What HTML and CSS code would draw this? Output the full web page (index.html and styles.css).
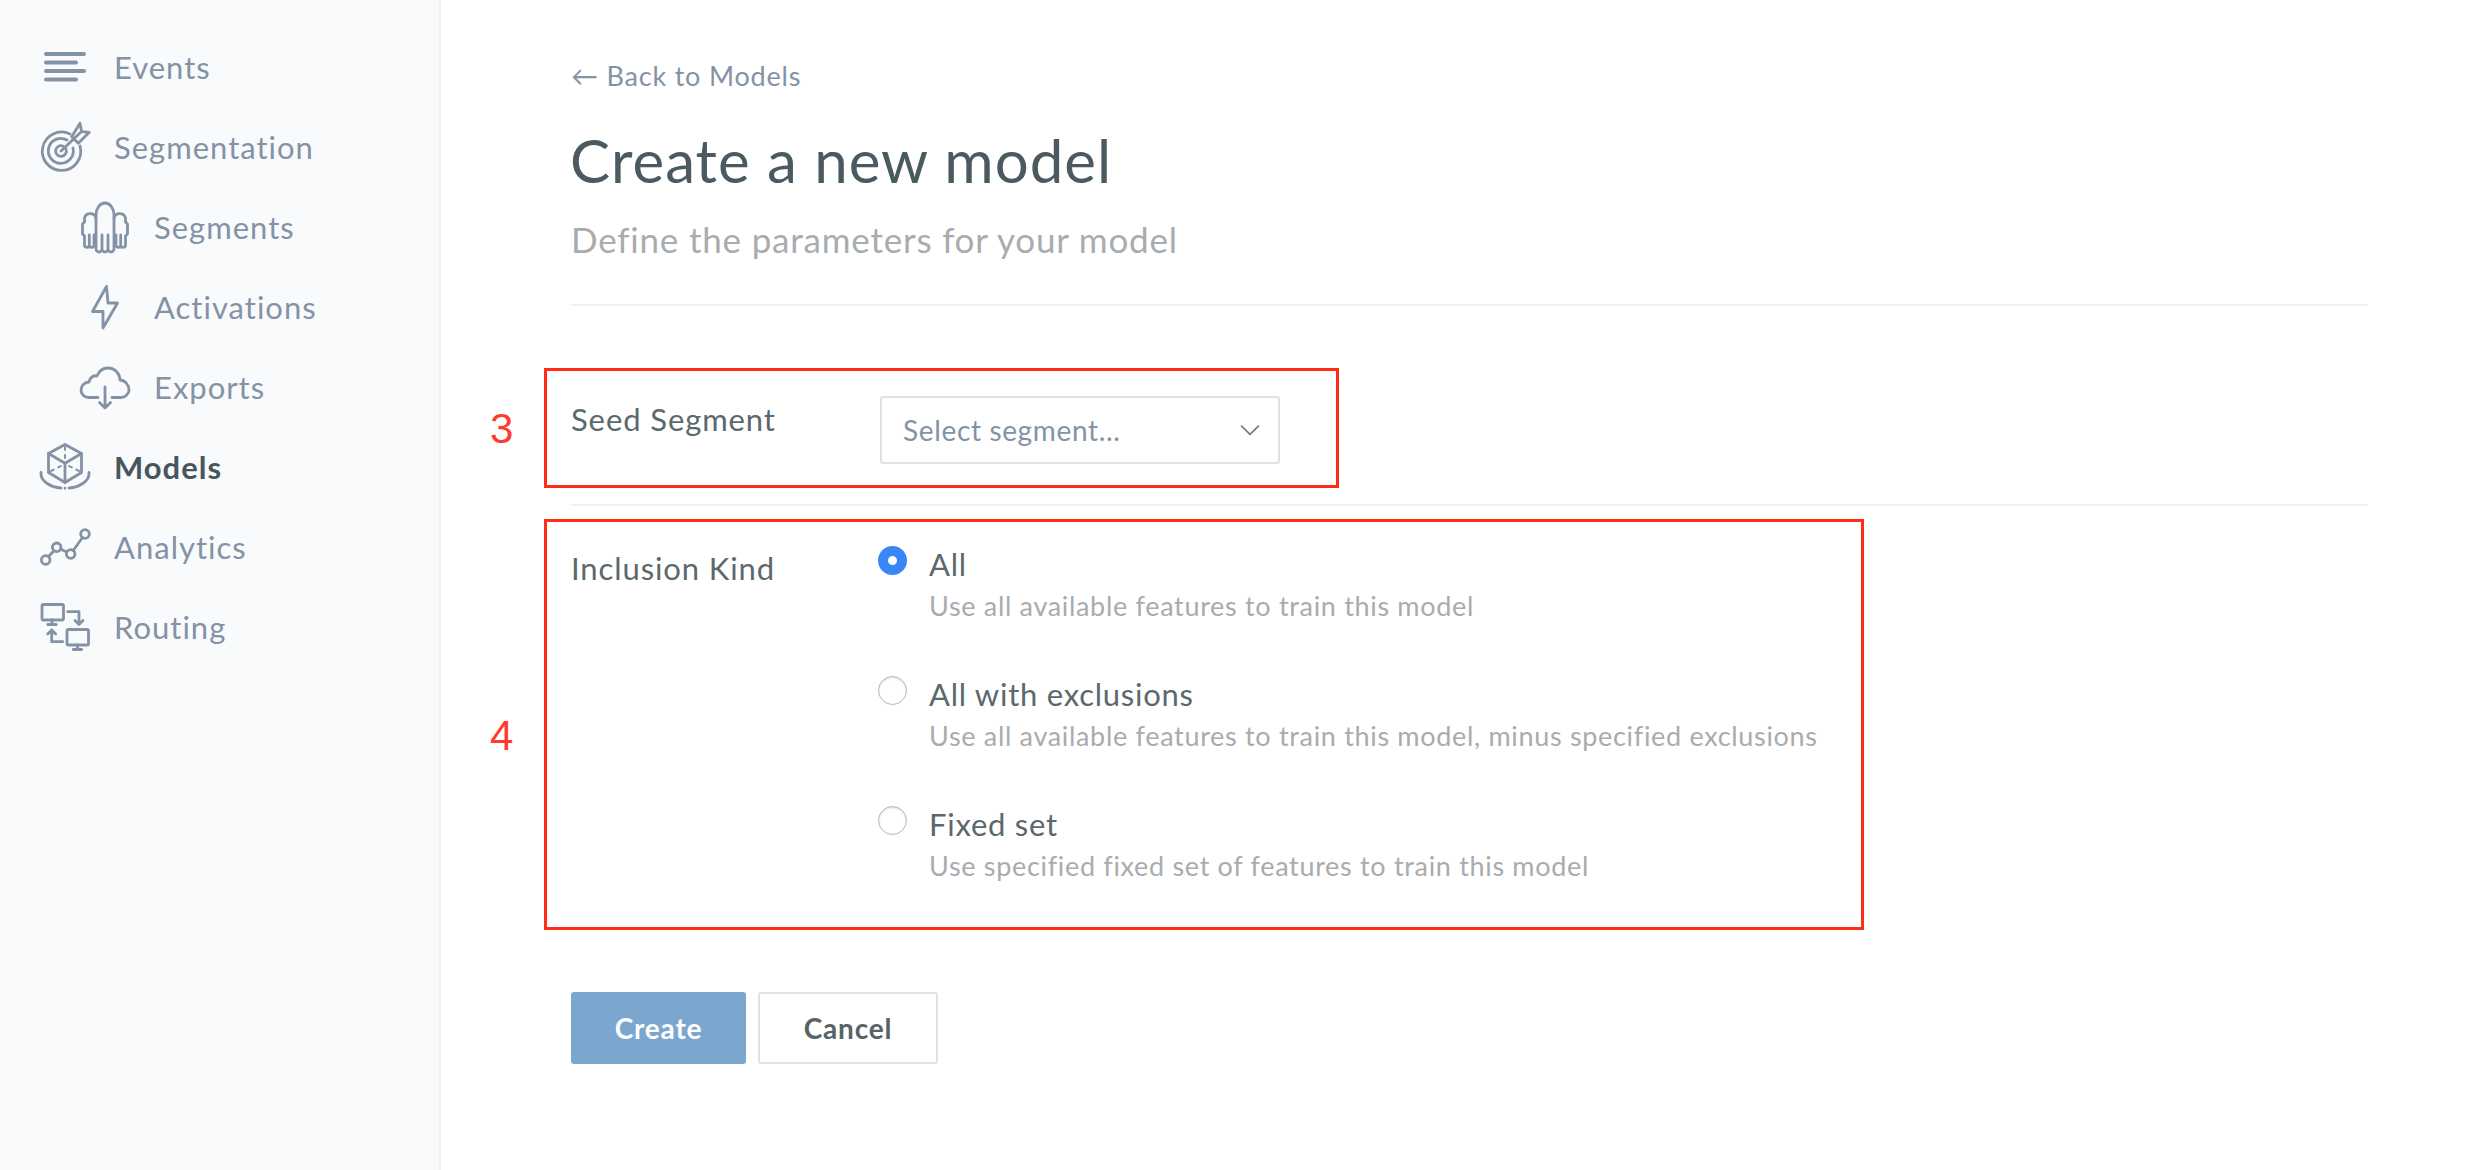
FILE: index.html
```html
<!DOCTYPE html>
<html lang="en">
<head>
<meta charset="utf-8">
<title>Create a new model</title>
<link rel="stylesheet" href="styles.css">
</head>
<body>
<div class="app">
  <nav class="sidebar">
    <a class="nav-item">
      <svg class="icon" viewBox="0 0 60 80"><path class="bars" d="M11 27H49M11 35.500H41M11 44H49M11 52.500H41"/></svg>
      <span>Events</span>
    </a>
    <a class="nav-item">
      <svg class="icon" viewBox="0 0 60 80"><g class="line"><path d="M35 27A19.200 19.200 0 1 0 45 39"/><path d="M32 33A12.500 12.500 0 1 0 38 41"/><path d="M28 39A5.400 5.400 0 1 0 31 42"/><path d="M26 44L46 25"/><path d="M36.700 29.700L45 16.300L46.700 24.700L54.300 25.300L43.300 36.300Z"/></g></svg>
      <span>Segmentation</span>
    </a>
    <a class="nav-item sub">
      <svg class="icon" viewBox="0 0 60 80"><g class="line"><path d="M21 62V28A9 12 0 0 1 39 28V62A3 3 0 0 1 33 62V48M33 62A3 3 0 0 1 27 62V48M27 62A3 3 0 0 1 21 62"/><path d="M21 31A6 6 0 0 0 9.500 31V35L7.500 37V47L9.500 49V58A2.300 2.300 0 0 0 14.300 58V48M14.300 58A2.300 2.300 0 0 0 19 58V48"/><path d="M39 31A6 6 0 0 1 50.500 31V35L52.500 37V47L50.500 49V58A2.300 2.300 0 0 1 45.700 58V48M45.700 58A2.300 2.300 0 0 1 41 58V48"/></g></svg>
      <span>Segments</span>
    </a>
    <a class="nav-item sub">
      <svg class="icon" viewBox="0 0 60 80"><path class="line" d="M31.500 19.500L17.500 44.500H28V61L42.500 36H33Z"/></svg>
      <span>Activations</span>
    </a>
    <a class="nav-item sub">
      <svg class="icon" viewBox="0 0 60 80"><g class="line"><path d="M23 50.500H14C9 50.500 6 47 6 43C6 38.500 10 35 14 35C15 30 19 28 22 29C24 24 28 21 33 21C40 21 45 27 45 33C50 33 54 38 54 43C54 47 50 50.500 46 50.500H37"/><path d="M30 40V60.500M24.500 55.500L30 61L35.500 55.500"/></g></svg>
      <span>Exports</span>
    </a>
    <a class="nav-item">
      <svg class="icon" viewBox="0 0 60 80"><g class="line"><path d="M30 17.500L46.500 26.500V45.500L30 55.500L13.500 45.500V26.500Z"/><path d="M13.500 26.500L30 36.300L46.500 26.500M30 36.300V55.500"/><path class="dash" d="M30 20V34M16 44L28 38M44 44L32 38"/><path d="M6 45.500C5 54 16 60.500 26 61M54 45.500C55 54 44 60.500 34 61M30 61.200V61.300"/></g></svg>
      <span class="strong">Models</span>
    </a>
    <a class="nav-item">
      <svg class="icon" viewBox="0 0 60 80"><g class="line"><circle cx="10.700" cy="53" r="4.300"/><circle cx="21.700" cy="40.300" r="4.300"/><circle cx="35.700" cy="47" r="4.300"/><circle cx="50" cy="27" r="4.300"/><path d="M13.500 49.500L19 43.800M25.700 42.200L31.700 45M38.200 43.500L47.500 30.500"/></g></svg>
      <span>Analytics</span>
    </a>
    <a class="nav-item">
      <svg class="icon" viewBox="0 0 60 80"><g class="line"><rect x="7" y="17.500" width="21.500" height="15.500" rx="1.500"/><path d="M17 33V37M12.700 37.500H21.300"/><rect x="32" y="42.500" width="21.500" height="15.500" rx="1.500"/><path d="M42.500 58V62M38.300 62.500H46.700"/><path d="M32.700 24.700H44V37M40 33.500L44 37.500L48 33.500"/><path d="M27.700 54.700H16.700V43M12.700 47L16.700 43L20.700 47"/></g></svg>
      <span>Routing</span>
    </a>
  </nav>

  <main class="content">
    <a class="back"><span class="arrow">←</span> Back to Models</a>
    <h1 class="title">Create a new model</h1>
    <p class="subtitle">Define the parameters for your model</p>

    <section class="row row-seed">
      <span class="marker marker-3">3</span>
      <span class="frame frame-3"></span>
      <label class="label">Seed Segment</label>
      <div class="select">
        <span>Select segment...</span>
        <svg class="chevron" viewBox="0 0 18 10"><path d="M1 1L9 9L17 1"/></svg>
      </div>
    </section>

    <section class="row row-kind">
      <span class="marker marker-4">4</span>
      <span class="frame frame-4"></span>
      <label class="label">Inclusion Kind</label>
      <div class="options">
        <div class="option">
          <span class="radio checked"></span>
          <div><div class="opt-title">All</div><div class="opt-desc">Use all available features to train this model</div></div>
        </div>
        <div class="option">
          <span class="radio"></span>
          <div><div class="opt-title">All with exclusions</div><div class="opt-desc">Use all available features to train this model, minus specified exclusions</div></div>
        </div>
        <div class="option">
          <span class="radio"></span>
          <div><div class="opt-title">Fixed set</div><div class="opt-desc">Use specified fixed set of features to train this model</div></div>
        </div>
      </div>
    </section>

    <div class="actions">
      <button class="btn primary">Create</button>
      <button class="btn">Cancel</button>
    </div>
  </main>
</div>
</body>
</html>
```
FILE: styles.css
```css
* { box-sizing: border-box; }
html, body { margin: 0; height: 100%; }
body { font-family: Lato, "Noto Sans", sans-serif; background: #fff; color: #4a5a60; overflow: hidden; }
.app { display: flex; height: 1170px; }

.sidebar { width: 441px; flex: none; background: #f9fafc; border-right: 2px solid #f0f1f3; padding-top: 27px; }
.nav-item { display: flex; align-items: center; gap: 19px; height: 80px; padding-left: 35px; font-size: 31px; letter-spacing: 1px; color: #8492a6; }
.nav-item.sub { padding-left: 75px; }
.strong { color: #47565c; font-weight: 700; }
.icon { width: 60px; height: 80px; flex: none; }
.line { fill: none; stroke: #8492a6; stroke-width: 2.800; stroke-linecap: round; stroke-linejoin: round; }
.dash { stroke-dasharray: 3 5; stroke-width: 2; }
.bars { fill: none; stroke: #8492a6; stroke-width: 4; stroke-linecap: round; }

.content { flex: 1; padding: 0 110px 0 130px; }
.back { display: block; margin-top: 58px; height: 36px; line-height: 36px; font-size: 27px; letter-spacing: 0.8px; color: #8492a6; }
.title { margin: 28px 0 0 -1px; font-size: 60px; line-height: 76px; font-weight: 400; letter-spacing: 1px; color: #4a5a60; }
.subtitle { margin: 20px 0 0; padding-bottom: 44px; border-bottom: 2px solid #eef0f1; font-size: 35px; line-height: 42px; letter-spacing: 0.8px; color: #a9acae; }

.row { position: relative; display: flex; align-items: flex-start; }
.row-seed { padding: 90px 0 40px; border-bottom: 2px solid #eef0f1; }
.row-kind { padding-top: 38px; }
.label { width: 309px; flex: none; font-size: 31px; line-height: 40px; letter-spacing: 0.9px; color: #5b686c; }
.row-seed .label { margin-top: 3px; }
.row-kind .label { margin-top: 4px; }

.select { width: 400px; height: 68px; padding: 0 18px 0 21px; display: flex; align-items: center; justify-content: space-between; border: 2px solid #dde2e3; border-radius: 3px; font-size: 28px; letter-spacing: 0.65px; color: #8492a6; }
.chevron { width: 20px; height: 12px; fill: none; stroke: #707a80; stroke-width: 1.500; }

.options { display: flex; flex-direction: column; gap: 38px; margin-left: -2px; }
.option { display: flex; align-items: flex-start; gap: 22px; height: 92px; }
.radio { width: 29px; height: 29px; flex: none; margin-top: 2px; border-radius: 50%; border: 1.500px solid #b4b8ba; background: #fff; box-shadow: inset 0 1px 2px #ddd; }
.radio.checked { border: 10px solid #3b86f7; box-shadow: none; }
.opt-title { font-size: 31px; line-height: 40px; letter-spacing: 0.75px; color: #5b686c; }
.opt-desc { margin-top: 2px; font-size: 27px; line-height: 40px; letter-spacing: 0.68px; color: #a9acae; }

.actions { display: flex; gap: 12px; margin-top: 96px; }
.btn { width: 180px; height: 72px; border: 2px solid #dde2e3; border-radius: 3px; background: #fff; font: 700 28px Lato, sans-serif; letter-spacing: 0.8px; color: #566367; }
.btn.primary { width: 175px; border: 0; background: #7ba7cf; color: #fff; }

.marker { position: absolute; left: -81px; font-size: 42px; line-height: 50px; color: #ff3b30; font-family: "Liberation Sans", sans-serif; }
.marker-3 { top: 98px; }
.marker-4 { top: 205px; }
.frame { position: absolute; left: -27px; border: 3px solid #ff2d16; pointer-events: none; }
.frame-3 { top: 62px; width: 795px; height: 120px; }
.frame-4 { top: 13px; width: 1320px; height: 411px; }
```
